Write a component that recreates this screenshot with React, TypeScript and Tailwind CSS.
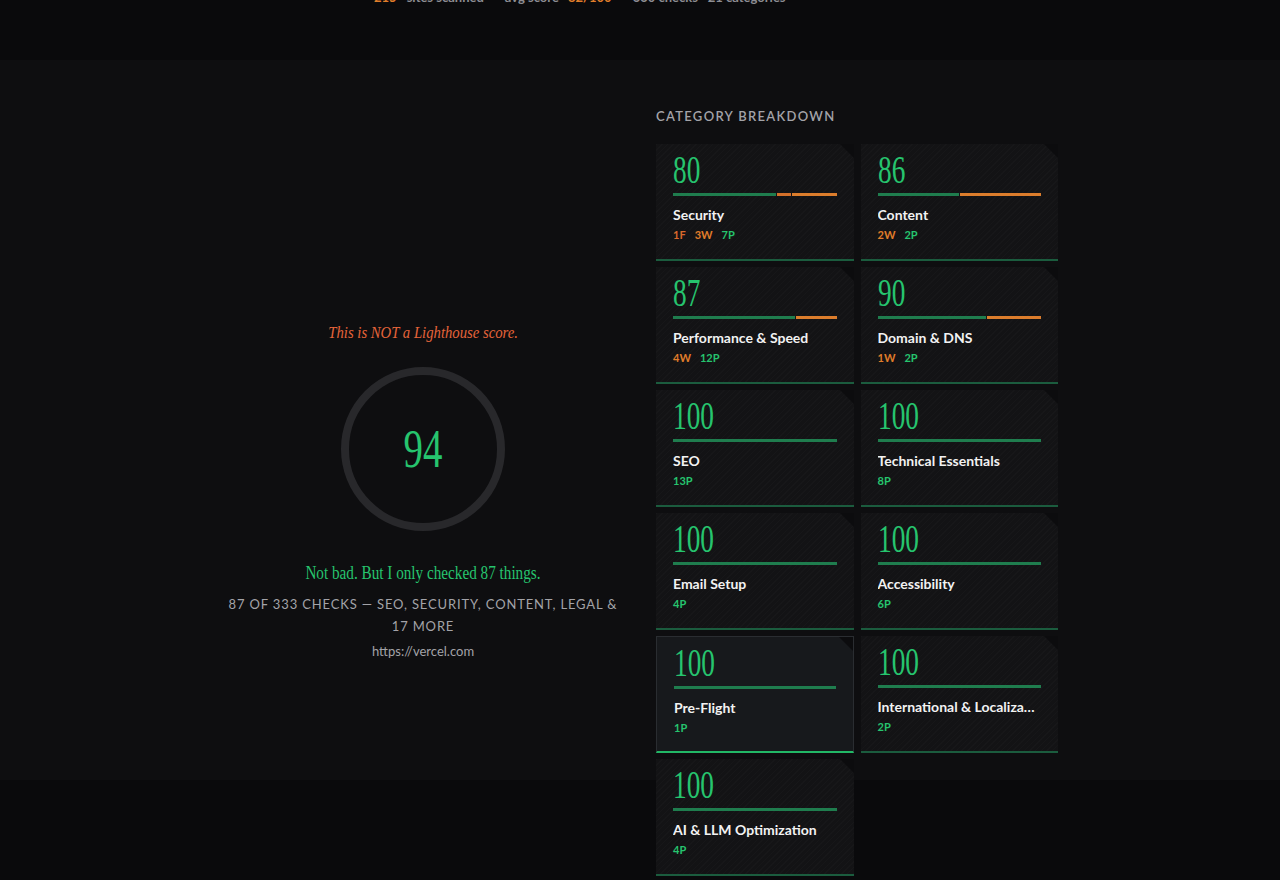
import React from "react";

type Category = {
  score: number;
  name: string;
  f?: number;
  w?: number;
  p: number;
  active?: boolean;
};

const categories: Category[] = [
  { score: 80, name: "Security", f: 1, w: 3, p: 7 },
  { score: 86, name: "Content", w: 2, p: 2 },
  { score: 87, name: "Performance & Speed", w: 4, p: 12 },
  { score: 90, name: "Domain & DNS", w: 1, p: 2 },
  { score: 100, name: "SEO", p: 13 },
  { score: 100, name: "Technical Essentials", p: 8 },
  { score: 100, name: "Email Setup", p: 4 },
  { score: 100, name: "Accessibility", p: 6 },
  { score: 100, name: "Pre-Flight", p: 1, active: true },
  { score: 100, name: "International & Localization", p: 2 },
  { score: 100, name: "AI & LLM Optimization", p: 4 },
];

const serif = "font-['Liberation_Serif','DejaVu_Serif',serif]";
const sans = "font-['Lato','Noto_Sans',sans-serif]";

function ScoreBar({ c }: { c: Category }) {
  // segments sized by check counts: pass, fail, warn
  return (
    <div className="flex h-[3px] w-full gap-[1px]">
      <div className="h-full bg-[#1f7d4e]" style={{ flexGrow: c.p }} />
      {c.f ? <div className="h-full bg-[#d4702a]" style={{ flexGrow: c.f }} /> : null}
      {c.w ? <div className="h-full bg-[#dc7d2c]" style={{ flexGrow: c.w }} /> : null}
    </div>
  );
}

function CategoryCard({ c }: { c: Category }) {
  return (
    <div
      className={
        "relative h-[117px] overflow-hidden px-[17px] pt-[7px] " +
        (c.active
          ? "border border-[#2a2d31] border-b-2 border-b-[#22b866] bg-[#17191c]"
          : "border-b-2 border-b-[#1b5c3e] bg-[#131315] bg-[repeating-linear-gradient(135deg,rgba(255,255,255,0.014)_0px,rgba(255,255,255,0.014)_1px,transparent_1px,transparent_4px)]")
      }
    >
      <div className="absolute right-0 top-0 h-0 w-0 border-l-[14px] border-t-[14px] border-l-transparent border-t-[#0c0c0e]" />
      <div className={`h-[37px] ${serif} text-[39px] leading-[37px] text-[#26c46e]`}>
        <span className="inline-block origin-left scale-x-[0.7]">{c.score}</span>
      </div>
      <div className="mt-[5px]">
        <ScoreBar c={c} />
      </div>
      <div className={`mt-[10px] truncate ${sans} text-[14px] font-bold leading-[18px] text-[#f2f2f2]`}>
        {c.name}
      </div>
      <div className={`mt-[4px] flex gap-[9px] ${sans} text-[11px] font-bold leading-[14px]`}>
        {c.f ? <span className="text-[#d8692c]">{c.f}F</span> : null}
        {c.w ? <span className="text-[#e07d2a]">{c.w}W</span> : null}
        <span className="text-[#26c46e]">{c.p}P</span>
      </div>
    </div>
  );
}

export default function App() {
  return (
    <div className={`min-h-[880px] overflow-hidden bg-[#0a0a0c] ${sans}`}>
      {/* stats strip, scrolled mostly out of view */}
      <div className="flex h-[60px] flex-col">
        <div className="-mt-[11px] flex items-baseline pl-[374px] text-[13px] font-bold leading-[16px]">
          <span className="text-[#e07d2a]">215</span>
          <span className="ml-[10px] text-[#8d8d93]">sites scanned</span>
          <span className="ml-[21px] text-[#8d8d93]">avg score</span>
          <span className="ml-[9px] text-[#e07d2a]">82/100</span>
          <span className="ml-[21px] text-[#8d8d93]">330 checks · 21 categories</span>
        </div>
      </div>

      <section className="h-[720px] bg-[#0e0e10]">
        <div className="mx-auto grid w-[836px] grid-cols-2 items-center gap-8 pt-[48px]">
          {/* left: overall score */}
          <div className="flex flex-col items-center text-center">
            <p className={`${serif} text-[16px] italic leading-[20px] text-[#e5643a]`}>
              <span className="inline-block scale-x-[0.92]">This is NOT a Lighthouse score.</span>
            </p>
            <div className="relative mt-[24px] h-[164px] w-[164px]">
              <svg width="164" height="164" viewBox="0 0 164 164" className="absolute inset-0">
                <circle cx="82" cy="82" r="78" fill="none" stroke="#28282b" strokeWidth="8" />
              </svg>
              <div className={`flex h-full items-center justify-center ${serif} text-[54px] leading-none text-[#26c46e]`}>
                <span className="inline-block scale-x-[0.72]">94</span>
              </div>
            </div>
            <p className={`mt-[31px] ${serif} text-[19px] leading-[22px] text-[#26c46e]`}>
              <span className="inline-block scale-x-[0.8] whitespace-nowrap">Not bad. But I only checked 87 things.</span>
            </p>
            <p className="mt-[9px] max-w-[396px] text-[13px] uppercase leading-[22px] tracking-[0.065em] text-[#a3a3a8]">
              87 of 333 checks — SEO, Security, Content, Legal &amp; 17 more
            </p>
            <p className="mt-[4px] text-[13px] leading-[20px] text-[#a3a3a8]">https://vercel.com</p>
          </div>

          {/* right: categories */}
          <div>
            <h2 className="text-[13px] font-semibold uppercase leading-[16px] tracking-[0.1em] text-[#a3a3a8]">
              Category Breakdown
            </h2>
            <div className="mt-[20px] grid grid-cols-2 gap-x-[7px] gap-y-[6px]">
              {categories.map((c) => (
                <CategoryCard key={c.name} c={c} />
              ))}
            </div>
          </div>
        </div>
      </section>
    </div>
  );
}
